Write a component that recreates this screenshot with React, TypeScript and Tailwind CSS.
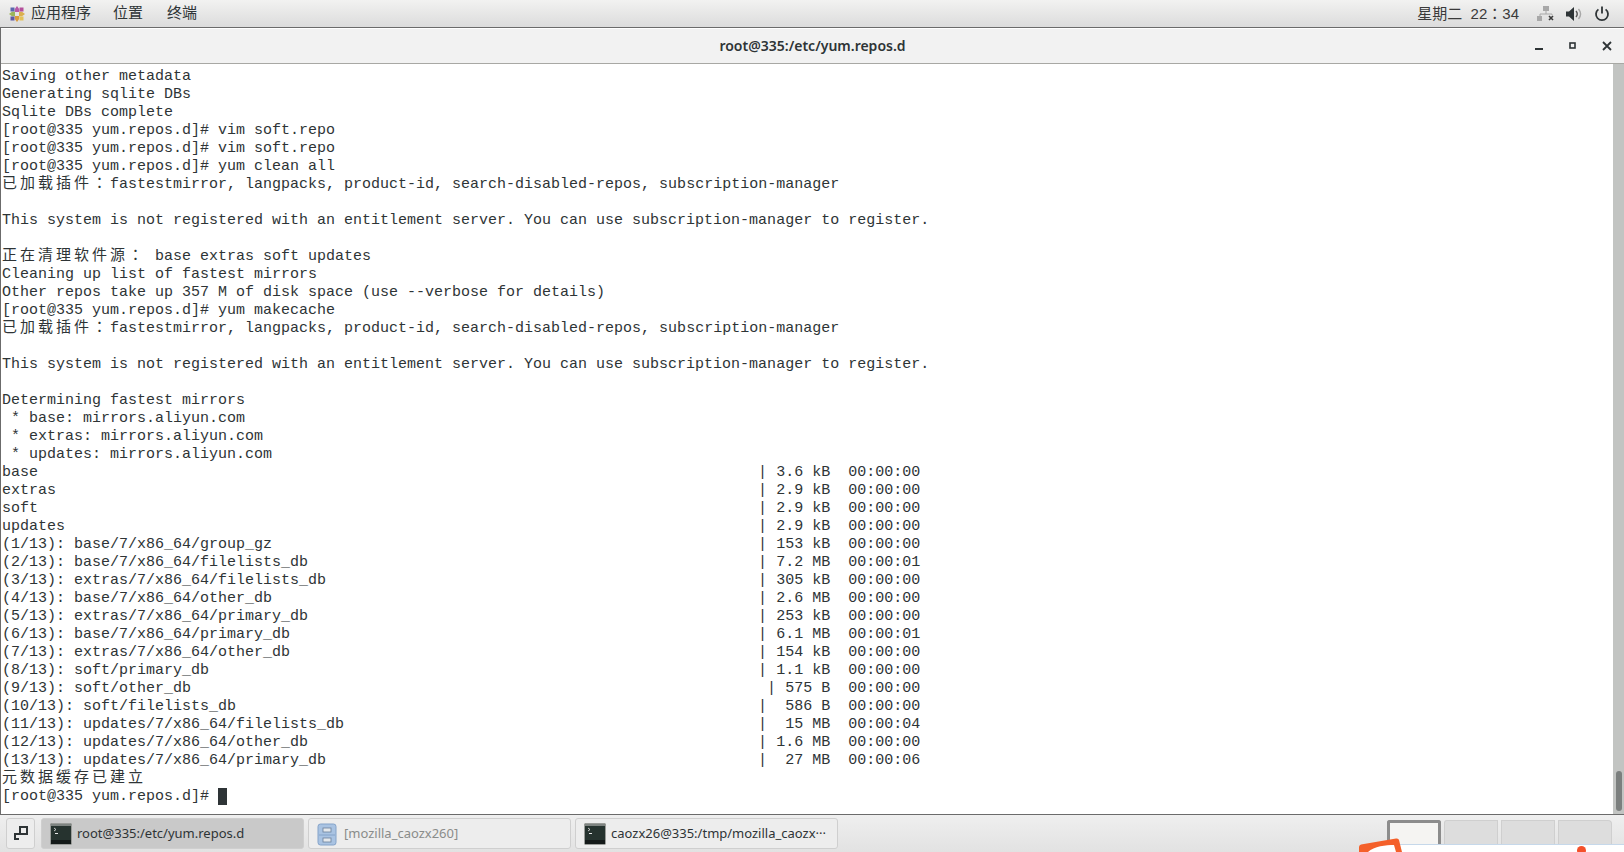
const MONO = "font-['Liberation_Mono','Noto_Sans_CJK_SC',monospace]";

const PROMPT = "[root@335 yum.repos.d]# ";
const TIME_ROWS: [string, string, string][] = [
  ["base", "| 3.6 kB", "00:00:00"],
  ["extras", "| 2.9 kB", "00:00:00"],
  ["soft", "| 2.9 kB", "00:00:00"],
  ["updates", "| 2.9 kB", "00:00:00"],
  ["(1/13): base/7/x86_64/group_gz", "| 153 kB", "00:00:00"],
  ["(2/13): base/7/x86_64/filelists_db", "| 7.2 MB", "00:00:01"],
  ["(3/13): extras/7/x86_64/filelists_db", "| 305 kB", "00:00:00"],
  ["(4/13): base/7/x86_64/other_db", "| 2.6 MB", "00:00:00"],
  ["(5/13): extras/7/x86_64/primary_db", "| 253 kB", "00:00:00"],
  ["(6/13): base/7/x86_64/primary_db", "| 6.1 MB", "00:00:01"],
  ["(7/13): extras/7/x86_64/other_db", "| 154 kB", "00:00:00"],
  ["(8/13): soft/primary_db", "| 1.1 kB", "00:00:00"],
  ["(9/13): soft/other_db", " | 575 B", "00:00:00"],
  ["(10/13): soft/filelists_db", "|  586 B", "00:00:00"],
  ["(11/13): updates/7/x86_64/filelists_db", "|  15 MB", "00:00:04"],
  ["(12/13): updates/7/x86_64/other_db", "| 1.6 MB", "00:00:00"],
  ["(13/13): updates/7/x86_64/primary_db", "|  27 MB", "00:00:06"],
];

const PLUGINS = "fastestmirror, langpacks, product-id, search-disabled-repos, subscription-manager";
const NOT_REGISTERED = "This system is not registered with an entitlement server. You can use subscription-manager to register.";

// tight leading so the taller CJK face doesn't push the line's baseline down
function Cjk({ children }: { children: string }) {
  return <span className="tracking-[3px] leading-[10px]">{children}</span>;
}

// the TC face centres the fullwidth colon in its cell, as the screenshot does
function Colon() {
  return <span className="tracking-[3px] leading-[10px] font-['Noto_Sans_CJK_TC',sans-serif]">：</span>;
}

function Line({ children }: { children?: React.ReactNode }) {
  return <div className="h-[18px] leading-[18px] whitespace-pre">{children}</div>;
}

function TerminalIcon() {
  return (
    <svg width="22" height="22" viewBox="0 0 22 22" className="shrink-0">
      <rect x="0.5" y="0.5" width="21" height="21" rx="1" fill="#26332f" stroke="#9a9c99" />
      <rect x="1" y="1" width="20" height="2" fill="#d5d6d4" opacity="0.5" />
      <rect x="1" y="17" width="20" height="4" fill="#141a19" />
      <path d="M4 5l2 1.5L4 8" fill="none" stroke="#e8e8e8" strokeWidth="0.8" />
      <path d="M5 10.5h3" stroke="#e8e8e8" strokeWidth="1" />
    </svg>
  );
}

function CabinetIcon() {
  return (
    <svg width="20" height="24" viewBox="0 0 20 24" className="shrink-0 mr-[2px]">
      <rect x="1" y="2" width="18" height="21" rx="2.5" fill="#a9c3e2" stroke="#84a3c9" />
      <path d="M2 13h16" stroke="#84a3c9" />
      <rect x="6" y="6" width="8" height="4" fill="#e4e8ec" stroke="#6a7f9b" strokeWidth="0.8" />
      <rect x="6" y="16" width="8" height="4" fill="#e4e8ec" stroke="#6a7f9b" strokeWidth="0.8" />
    </svg>
  );
}

function GnomeFoot() {
  return (
    <svg width="16" height="16" viewBox="0 0 16 16">
      <path d="M8 0l2.200 3v3H5.800V3z" fill="#b75aa8" />
      <path d="M16 8l-3 2.200h-3V5.800h3z" fill="#dbb04e" />
      <path d="M8 16l-2.200-3v-3h4.400v3z" fill="#d99a3e" />
      <path d="M0 8l3-2.200h3v4.400H3z" fill="#9cb65a" />
      <rect x="1.500" y="1.500" width="4" height="4" fill="#5a66ad" />
      <rect x="10.500" y="1.500" width="4" height="4" fill="#b44f9b" />
      <rect x="10.500" y="10.500" width="4" height="4" fill="#e3c25a" />
      <rect x="1.500" y="10.500" width="4" height="4" fill="#5f5aa5" />
    </svg>
  );
}

function Tab({ active, muted, icon, children }: { active?: boolean; muted?: boolean; icon: React.ReactNode; children: string }) {
  return (
    <div className={`w-[263px] h-[31px] flex items-center gap-[5px] pl-[8px] rounded-[3px] border border-[#cfcfcf] text-[13px] font-['Noto_Sans',sans-serif] ${active ? "bg-[#c9c9c9] text-[#2e3436]" : muted ? "bg-[#ededed] text-[#8a8c8a]" : "bg-[#ededed] text-[#2e3436]"}`}>
      {icon}
      <span className="whitespace-pre">{children}</span>
    </div>
  );
}

export default function App() {
  return (
    <div className="w-[1624px] h-[852px] overflow-hidden relative flex flex-col bg-white font-['Liberation_Sans','Noto_Sans_CJK_SC',sans-serif] text-[#2e3436]">
      {/* top panel */}
      <div className="h-[28px] shrink-0 flex items-center justify-between border-b border-[#6b6b6b] bg-gradient-to-b from-[#f2f2f1] to-[#dcdcdc]">
        <div className="flex items-center text-[15px] pl-[9px]">
          <GnomeFoot />
          <span className="ml-[6px]">应用程序</span>
          <span className="ml-[22px]">位置</span>
          <span className="ml-[24px]">终端</span>
        </div>
        <div className="flex items-center">
          <span className="text-[15px] text-[#3a3a3a] whitespace-pre">星期二  22<span className="font-['Noto_Sans_CJK_TC',sans-serif]">：</span>34</span>
          <svg width="18" height="16" viewBox="0 0 18 16" className="ml-[18px]">
            <rect x="6" y="0" width="6" height="5" fill="#a8a8a8" />
            <path d="M9 5v3M3 11V8h12v1" fill="none" stroke="#a8a8a8" />
            <rect x="0" y="10" width="5" height="5" fill="#a8a8a8" />
            <path d="M12 10l4 4M16 10l-4 4" stroke="#3a3a3a" strokeWidth="1.6" />
          </svg>
          <svg width="16" height="14" viewBox="0 0 16 14" className="ml-[11px]">
            <path d="M0 4.500h3L8 0v14L3 9.500H0z" fill="#2e3436" />
            <path d="M10 4c1.500 1.800 1.500 4.200 0 6" fill="none" stroke="#555" strokeWidth="1.400" />
            <path d="M12.500 2c2.500 3 2.500 7 0 10" fill="none" stroke="#a8a8a8" strokeWidth="1.400" />
          </svg>
          <svg width="16" height="16" viewBox="0 0 16 16" className="ml-[12px] mr-[14px]">
            <path d="M4.400 3.400a6 6 0 1 0 7.200 0" fill="none" stroke="#2e3436" strokeWidth="1.800" />
            <path d="M8 0.500v7" stroke="#2e3436" strokeWidth="1.800" />
          </svg>
        </div>
      </div>

      {/* window */}
      <div className="flex-1 min-h-0 flex flex-col border-l border-[#6b6b6b]">
        <div className="h-[36px] shrink-0 relative flex items-center justify-center pb-[2px] bg-[#f2f2f2] border-t border-t-white border-b border-b-[#a8a8a4] text-[14px] font-semibold font-['Noto_Sans',sans-serif] text-[#2e3436]">
          root@335:/etc/yum.repos.d
          <div className="absolute right-[0px] top-0 h-full flex items-center">
            <svg width="10" height="10" viewBox="0 0 10 10" className="mr-[24px]"><rect x="1" y="7" width="8" height="2" fill="#2e3436" /></svg>
            <svg width="10" height="10" viewBox="0 0 10 10" className="mr-[24px]"><rect x="2" y="2" width="5" height="5" fill="none" stroke="#2e3436" strokeWidth="1.600" /></svg>
            <svg width="10" height="10" viewBox="0 0 10 10" className="mr-[12px]"><path d="M1 1l8 8M9 1l-8 8" stroke="#2e3436" strokeWidth="1.800" /></svg>
          </div>
        </div>

        <div className="flex-1 min-h-0 flex">
          <div className={`flex-1 min-w-0 pl-[1px] pt-[4px] text-[15px] text-[#2e3436] ${MONO}`}>
            <Line>Saving other metadata</Line>
            <Line>Generating sqlite DBs</Line>
            <Line>Sqlite DBs complete</Line>
            <Line>{PROMPT}vim soft.repo</Line>
            <Line>{PROMPT}vim soft.repo</Line>
            <Line>{PROMPT}yum clean all</Line>
            <Line><Cjk>已加载插件</Cjk><Colon />{PLUGINS}</Line>
            <Line />
            <Line>{NOT_REGISTERED}</Line>
            <Line />
            <Line><Cjk>正在清理软件源</Cjk><Colon /> base extras soft updates</Line>
            <Line>Cleaning up list of fastest mirrors</Line>
            <Line>Other repos take up 357 M of disk space (use --verbose for details)</Line>
            <Line>{PROMPT}yum makecache</Line>
            <Line><Cjk>已加载插件</Cjk><Colon />{PLUGINS}</Line>
            <Line />
            <Line>{NOT_REGISTERED}</Line>
            <Line />
            <Line>Determining fastest mirrors</Line>
            <Line> * base: mirrors.aliyun.com</Line>
            <Line> * extras: mirrors.aliyun.com</Line>
            <Line> * updates: mirrors.aliyun.com</Line>
            {TIME_ROWS.map(([name, size, time]) => (
              <Line key={name}>{`${name.padEnd(84)}${size}  ${time}`}</Line>
            ))}
            <Line><Cjk>元数据缓存已建立</Cjk></Line>
            <div className="h-[18px] leading-[18px] whitespace-pre flex">
              <span>{PROMPT}</span>
              <span className="w-[9px] h-[17px] bg-[#2e3436]" />
            </div>
          </div>
          <div className="w-[11px] shrink-0 bg-[#c2c4c2] flex flex-col justify-end items-center pb-[3px]">
            <div className="w-[6px] h-[40px] rounded-full bg-[#7b7f7e]" />
          </div>
        </div>
      </div>

      {/* bottom panel */}
      <div className="h-[38px] shrink-0 flex items-center border-t border-[#6b6b6b] bg-gradient-to-b from-[#efefef] to-[#e2e2e2] pl-[6px]">
        <div className="w-[29px] h-[31px] flex items-center justify-center rounded-[3px] border border-[#cfcfcf] bg-[#ededed]">
          <svg width="15" height="15" viewBox="0 0 15 15">
            <rect x="7" y="1" width="7" height="7" fill="none" stroke="#2e3436" strokeWidth="2" />
            <path d="M1 14V7h5v2H3v3h3v2z" fill="#2e3436" />
          </svg>
        </div>
        <div className="ml-[6px] flex gap-[4px]">
          <Tab active icon={<TerminalIcon />}>root@335:/etc/yum.repos.d</Tab>
          <Tab muted icon={<CabinetIcon />}>[mozilla_caozx260]</Tab>
          <Tab icon={<TerminalIcon />}>caozx26@335:/tmp/mozilla_caozx···</Tab>
        </div>
        <div className="ml-auto mr-[12px] self-end flex gap-[3px]">
          <div className="w-[54px] h-[32px] rounded-t-[3px] border-[3px] border-b-0 border-[#8c8c8c] bg-[#f5f4f2]" />
          <div className="w-[54px] h-[32px] rounded-tl-[3px] border border-b-0 border-[#cfcfcf] bg-[#dddddd]" />
          <div className="w-[54px] h-[32px] border border-b-0 border-[#cfcfcf] bg-[#dddddd]" />
          <div className="w-[54px] h-[32px] rounded-tr-[4px] border border-b-0 border-[#cfcfcf] bg-[#dddddd]" />
        </div>
      </div>

      {/* pasted annotation sticking up over the panel */}
      <div className="absolute left-[1400px] top-[844px] w-[224px] h-[8px] bg-white border-t border-[#c6d8ea]" />
      <svg width="46" height="16" viewBox="0 0 46 16" className="absolute left-[1358px] top-[836px]">
        <path d="M1 11Q1 9 3 8.500L38 2.500Q40.500 2 41 4L44 16H1z" fill="#f4602a" />
        <path d="M10 16C16 10 28 9 36 9L38 16z" fill="#ffffff" />
      </svg>
      <div className="absolute left-[1577px] top-[846px] w-[9px] h-[9px] rounded-full bg-[#f4502a]" />
    </div>
  );
}
